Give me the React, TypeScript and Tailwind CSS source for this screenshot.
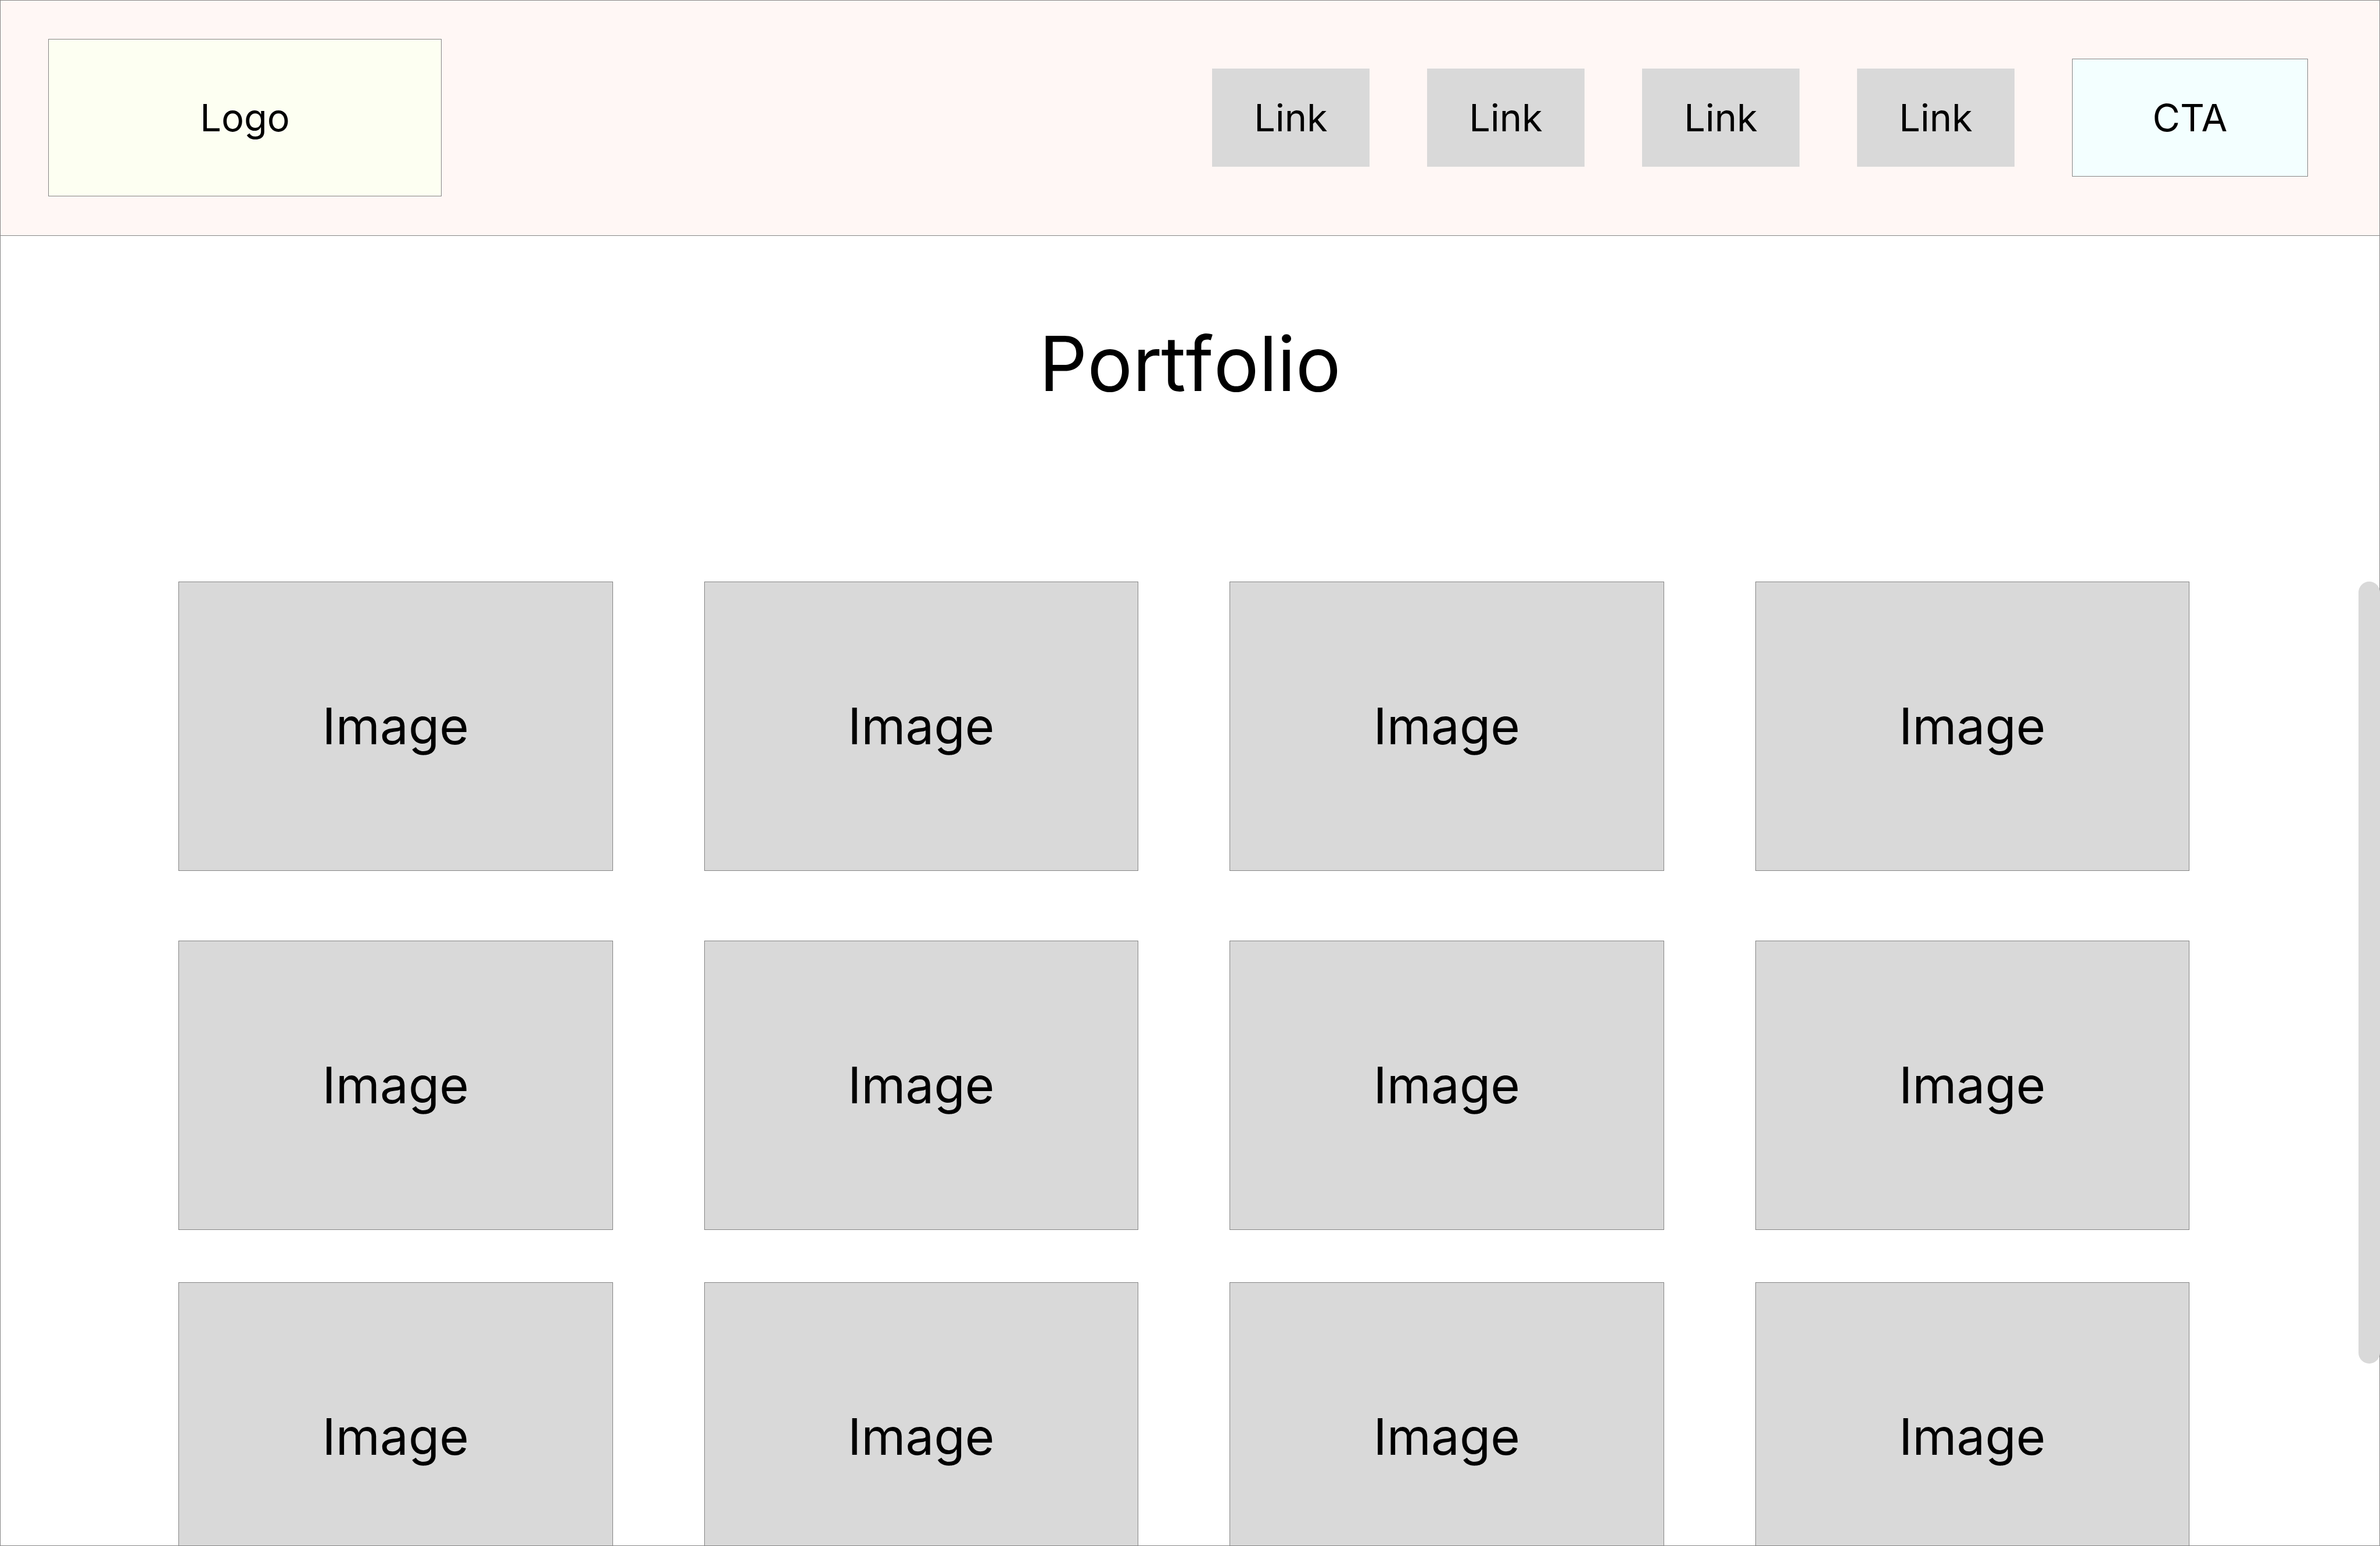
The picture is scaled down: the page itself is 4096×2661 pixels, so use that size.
const links = ["Link", "Link", "Link", "Link"];

type Row = { id: string; spacing: string; height: string };

const rows: Row[] = [
  { id: "first", spacing: "", height: "h-[498px]" },
  { id: "second", spacing: "mt-[120px]", height: "h-[498px]" },
  { id: "third", spacing: "mt-[90px]", height: "h-[532px]" },
];

function Header() {
  return (
    <header className="flex h-[406px] items-center justify-between border-b border-[#858585] bg-[#fff7f5] pr-[124px] pl-[83px] text-[65px] leading-[80px]">
      <a
        href="#home"
        className="flex h-[271px] w-[677px] items-center justify-center border border-[#858585] bg-[#fdfff2]"
      >
        Logo
      </a>
      <nav aria-label="Main" className="flex items-center gap-[99px]">
        {links.map((label, i) => (
          <a
            key={i}
            href={`#section-${i + 1}`}
            className="flex h-[169px] w-[271px] items-center justify-center bg-[#d9d9d9]"
          >
            {label}
          </a>
        ))}
        <button
          type="button"
          className="flex h-[203px] w-[406px] items-center justify-center border border-[#858585] bg-[#f3ffff]"
        >
          CTA
        </button>
      </nav>
    </header>
  );
}

function ImageRow({ spacing, height }: Row) {
  return (
    <div className={`grid grid-cols-4 gap-[157px] ${spacing}`}>
      {[0, 1, 2, 3].map((i) => (
        <div
          key={i}
          className={`flex items-center justify-center border border-[#858585] bg-[#d9d9d9] text-[87px] leading-[106px] ${height}`}
        >
          Image
        </div>
      ))}
    </div>
  );
}

export default function App() {
  return (
    <div className="relative h-screen overflow-hidden bg-white font-['Inter',sans-serif] text-black">
      <Header />
      <main>
        <h1 className="pt-[141px] text-center text-[130px] leading-[158px] [font-kerning:none]">Portfolio</h1>
        <div className="mt-[296px] flex items-start">
          <section aria-label="Gallery" className="flex-1 pr-[291px] pl-[307px]">
            {rows.map((row) => (
              <ImageRow key={row.id} {...row} />
            ))}
          </section>
          {/* Scroll thumb, drawn above the frame line */}
          <div className="z-10 h-[1346px] w-[37px] rounded-full bg-[#d9d9d9]" />
        </div>
      </main>
      <div className="pointer-events-none absolute inset-0 border border-[#858585]" />
    </div>
  );
}
